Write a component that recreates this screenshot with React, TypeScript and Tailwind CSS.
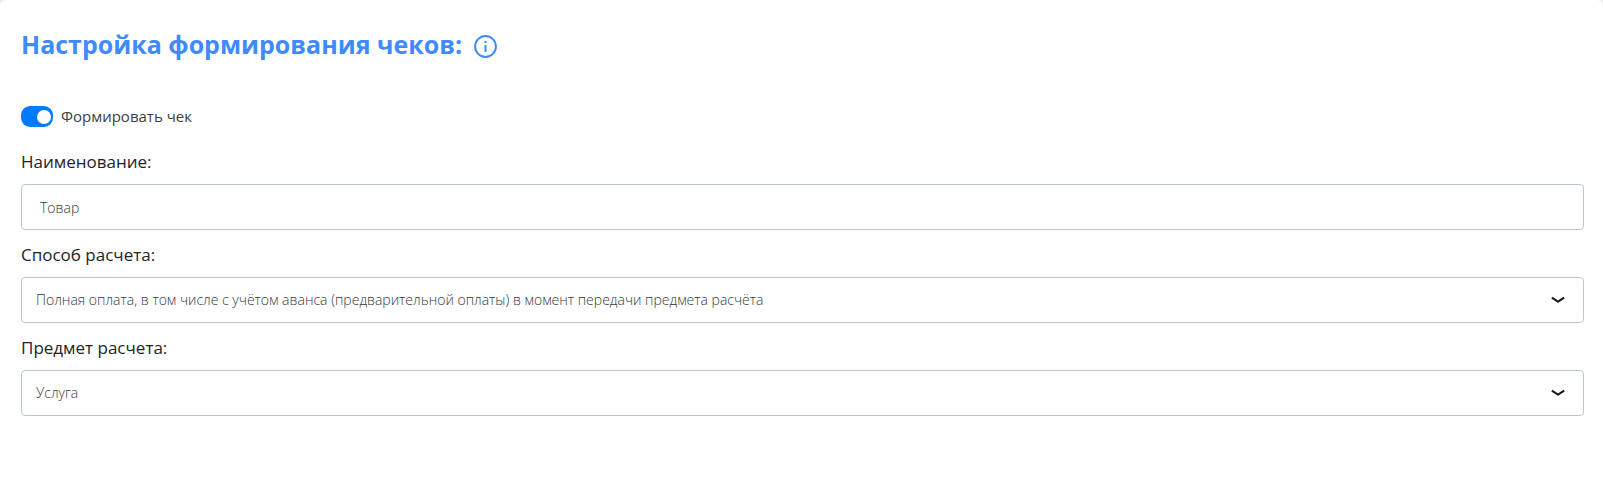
import React, { useState } from 'react';

const paymentMethods = [
  'Полная оплата, в том числе с учётом аванса (предварительной оплаты) в момент передачи предмета расчёта',
  'Предоплата 100%',
  'Аванс',
];

const paymentSubjects = ['Услуга', 'Товар', 'Работа'];

interface SelectFieldProps {
  id: string;
  label: string;
  options: string[];
}

const SelectField: React.FC<SelectFieldProps> = ({ id, label, options }) => {
  const [value, setValue] = useState(options[0]);

  return (
    <div>
      <label htmlFor={id} className="block text-[17px] leading-6 text-[#212529]">
        {label}
      </label>
      <div className="mt-2.5 grid items-center">
        <select
          id={id}
          value={value}
          onChange={(e) => setValue(e.target.value)}
          className="col-start-1 row-start-1 h-[46px] w-full appearance-none rounded border border-[#b8c7d6] bg-white pr-12 pl-3.5 text-sm font-light text-[#343a40]"
        >
          {options.map((option) => (
            <option key={option}>{option}</option>
          ))}
        </select>
        <svg
          viewBox="0 0 14 8"
          fill="none"
          className="pointer-events-none col-start-1 row-start-1 mr-[19px] h-2 w-3.5 justify-self-end"
        >
          <path d="M.8 1.6 7 5.7 13.2 1.6" stroke="#1a1a1a" strokeWidth="2" strokeLinejoin="round" />
        </svg>
      </div>
    </div>
  );
};

const App: React.FC = () => {
  const [enabled, setEnabled] = useState(true);
  const [name, setName] = useState('Товар');

  return (
    <div className="bg-[#eeeeee] font-['Open_Sans','Noto_Sans',sans-serif]">
      <div className="min-h-screen rounded-t-md bg-[#fefefe] pt-6 pr-[19px] pb-12 pl-[21px]">
        {/* Header */}
        <div className="flex items-center gap-3">
          <h1 className="text-[25px] leading-10 font-bold text-[#3d8bff]">
            Настройка формирования чеков:
          </h1>
          <button type="button" aria-label="Информация" className="mt-1 text-[#3d8bff]">
            <svg viewBox="0 0 23 23" fill="none" className="h-[23px] w-[23px]">
              <circle cx="11.5" cy="11.5" r="10.4" stroke="currentColor" strokeWidth="2" />
              <path d="M11.5 10V17" stroke="currentColor" strokeWidth="2" />
              <path d="M11.5 6V8" stroke="currentColor" strokeWidth="2.2" />
            </svg>
          </button>
        </div>

        {/* Toggle */}
        <label className="mt-10 flex h-6 items-center gap-2 text-[15px] text-[#3c4146]">
          <input
            type="checkbox"
            role="switch"
            checked={enabled}
            onChange={(e) => setEnabled(e.target.checked)}
            className="h-[21px] w-8 appearance-none rounded-[9px] bg-[#adb5bd] before:mt-1 before:ml-0.5 before:block before:h-3.5 before:w-3.5 before:rounded-full before:bg-white checked:bg-[#007bff] checked:before:ml-4"
          />
          Формировать чек
        </label>

        {/* Fields */}
        <div className="mt-[22px] space-y-[13px]">
          <div>
            <label htmlFor="name" className="block text-[17px] leading-6 text-[#212529]">
              Наименование:
            </label>
            <input
              id="name"
              type="text"
              value={name}
              onChange={(e) => setName(e.target.value)}
              className="mt-2.5 block h-[46px] w-full rounded border border-[#b8c7d6] bg-white px-[18px] text-sm font-light text-[#343a40]"
            />
          </div>
          <SelectField id="method" label="Способ расчета:" options={paymentMethods} />
          <SelectField id="subject" label="Предмет расчета:" options={paymentSubjects} />
        </div>
      </div>
    </div>
  );
};

export default App;
